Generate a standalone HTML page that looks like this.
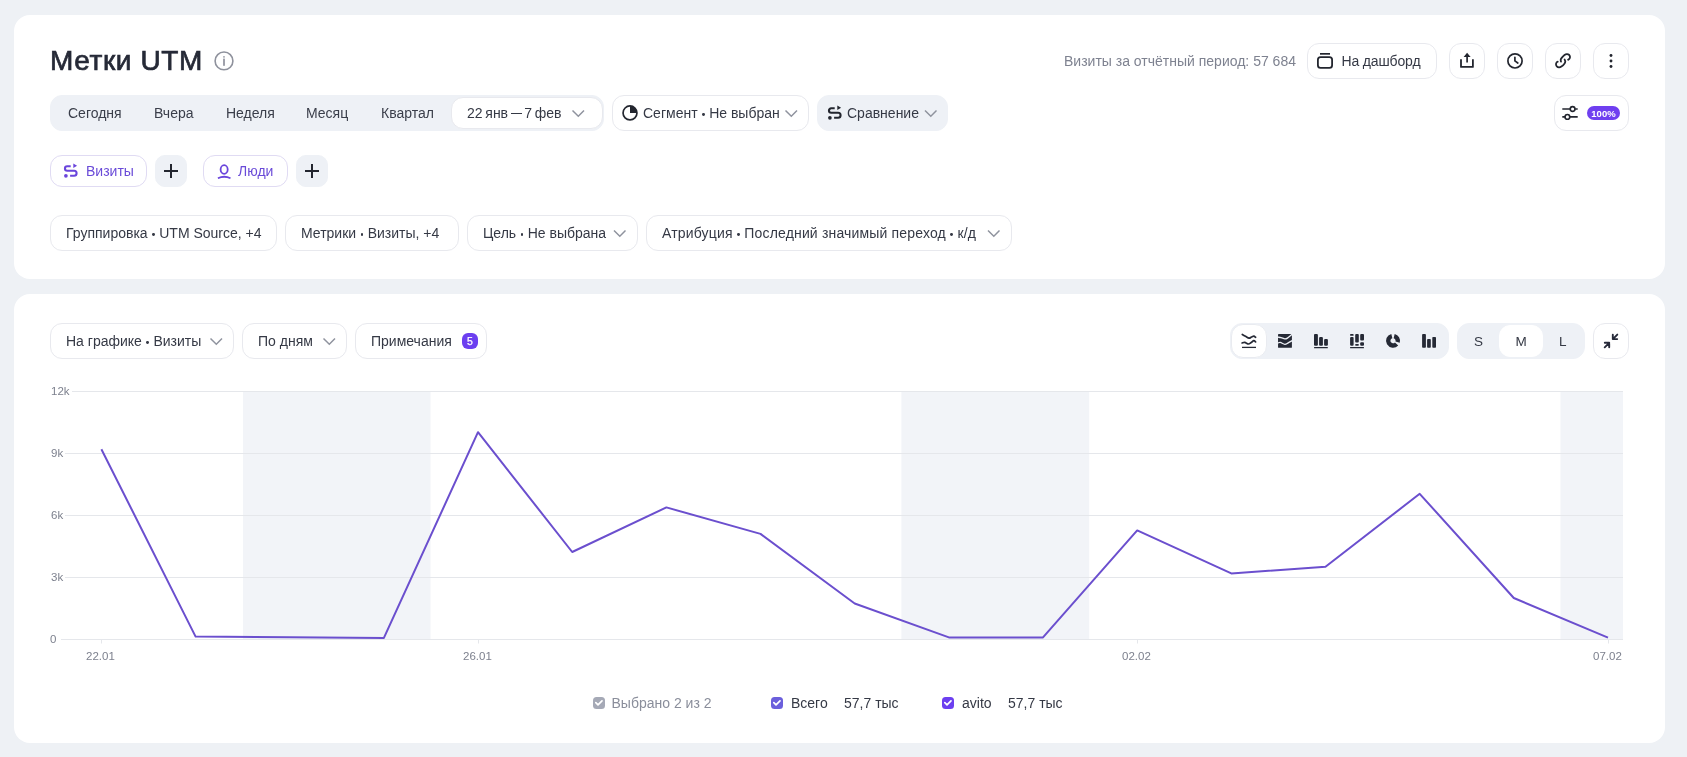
<!DOCTYPE html>
<html><head><meta charset="utf-8">
<style>
*{box-sizing:border-box;margin:0;padding:0}
html,body{width:1687px;height:757px;overflow:hidden;background:#eef1f5;font-family:"Liberation Sans",sans-serif;color:#353945}
.card{position:absolute;background:#fff;border-radius:16px}
.t{position:absolute;white-space:nowrap;font-size:14px}
.p{position:absolute;height:36px;line-height:34px;border:1px solid #e8e9ee;border-radius:12px;background:#fff;font-size:14px;white-space:nowrap;color:#353945}
.p span{position:absolute;top:0}
.g{background:#eef1f6;border-color:#eef1f6}
svg.ic{position:absolute;overflow:visible}
.b{display:inline-block;width:2.8px;height:2.8px;border-radius:50%;background:currentColor;margin:0 4.4px;vertical-align:2px}
.ax{position:absolute;font-size:11.5px;color:#7d818e;white-space:nowrap;line-height:14px}
</style></head><body><div id="w" style="position:absolute;left:0;top:0;width:1687px;height:757px;will-change:transform">
<div class="card" style="left:14px;top:15px;width:1651px;height:264px"></div>
<div class="card" style="left:14px;top:294px;width:1651px;height:449px"></div>

<!-- ===== HEADER ===== -->
<div class="t" style="left:50px;top:45px;font-size:28px;font-weight:normal;-webkit-text-stroke:0.7px #262a37;letter-spacing:0.6px;line-height:32px;color:#262a37">Метки UTM</div>
<svg class="ic" style="left:0;top:0" width="1" height="1">
  <circle cx="224" cy="60.9" r="8.9" fill="none" stroke="#8f929d" stroke-width="1.6"/>
  <rect x="223.15" y="56.1" width="1.7" height="1.7" rx=".8" fill="#8f929d"/><rect x="223.15" y="58.6" width="1.7" height="7.2" fill="#8f929d"/>
</svg>

<div class="t" style="left:1064px;top:43px;line-height:36px;color:#7e8290">Визиты за отчётный период: 57 684</div>

<div class="p" style="left:1307px;top:43px;width:130px"><span style="left:33.5px;letter-spacing:-0.15px">На дашборд</span></div>
<div class="p" style="left:1449px;top:43px;width:36px"></div>
<div class="p" style="left:1497px;top:43px;width:36px"></div>
<div class="p" style="left:1545px;top:43px;width:36px"></div>
<div class="p" style="left:1593px;top:43px;width:36px"></div>

<svg class="ic" style="left:0;top:0" width="1" height="1" fill="none" stroke="#23262f" stroke-width="1.8">
  <!-- dashboard -->
  <rect x="1320" y="53" width="10" height="1.7" fill="#23262f" stroke="none"/>
  <rect x="1317.9" y="57.2" width="14.2" height="10.7" rx="2.6"/>
  <!-- upload -->
  <path d="M1461 59.2V66.9H1472.9V59.2" stroke-linejoin="round"/>
  <path d="M1467.1 62.4V56" stroke-width="1.7"/>
  <path d="M1463.6 56.9L1467.1 52.8L1470.6 56.9Z" fill="#23262f" stroke="none"/>
  <!-- clock -->
  <circle cx="1515" cy="60.9" r="7.1" stroke-width="1.7"/>
  <path d="M1514.9 57.3V60.9L1517.8 63" stroke-width="1.7" stroke-linecap="round" stroke-linejoin="round"/>
  <!-- link -->
  <g stroke-linecap="round" stroke-width="1.8">
    <path d="M1561.00 61.60C1560.95 61.27 1560.55 60.27 1560.70 59.60C1560.85 58.93 1561.27 58.37 1561.90 57.60C1562.53 56.83 1563.68 55.58 1564.50 55.00C1565.32 54.42 1566.05 54.15 1566.80 54.10C1567.55 54.05 1568.47 54.25 1569.00 54.70C1569.53 55.15 1569.93 56.12 1570.00 56.80C1570.07 57.48 1569.72 58.30 1569.40 58.80C1569.08 59.30 1568.32 59.63 1568.10 59.80"/>
    <path d="M1564.60 59.50C1564.72 59.82 1565.33 60.70 1565.30 61.40C1565.27 62.10 1565.05 62.85 1564.40 63.70C1563.75 64.55 1562.30 65.90 1561.40 66.50C1560.50 67.10 1559.77 67.33 1559.00 67.30C1558.23 67.27 1557.30 66.82 1556.80 66.30C1556.30 65.78 1556.03 64.82 1556.00 64.20C1555.97 63.58 1556.32 63.02 1556.60 62.60C1556.88 62.18 1557.52 61.85 1557.70 61.70"/>
  </g>
  <!-- dots -->
  <g fill="#23262f" stroke="none">
    <circle cx="1611" cy="55.5" r="1.45"/><circle cx="1611" cy="61" r="1.45"/><circle cx="1611" cy="66.5" r="1.45"/>
  </g>
  <!-- dashboard -->
</svg>

<!-- ===== ROW: dates ===== -->
<div class="p g" style="left:50px;top:95px;width:554px"></div>
<div class="t" style="left:68px;top:95px;line-height:36px;color:#3a3e4a">Сегодня</div>
<div class="t" style="left:154px;top:95px;line-height:36px;color:#3a3e4a">Вчера</div>
<div class="t" style="left:226px;top:95px;line-height:36px;color:#3a3e4a">Неделя</div>
<div class="t" style="left:306px;top:95px;line-height:36px;color:#3a3e4a">Месяц</div>
<div class="t" style="left:381px;top:95px;line-height:36px;color:#3a3e4a">Квартал</div>
<div class="p" style="left:451px;top:97px;width:152px;height:32px;line-height:30px"><span style="left:15px;word-spacing:-1.15px">22 янв <i style="display:inline-block;width:10.7px;height:1.3px;background:currentColor;vertical-align:3.6px"></i> 7 фев</span></div>

<div class="p" style="left:612px;top:95px;width:197px"><span style="left:30px">Сегмент<i class="b"></i>Не выбран</span></div>
<div class="p g" style="left:817px;top:95px;width:131px"><span style="left:29px">Сравнение</span></div>

<div class="p" style="left:1554px;top:95px;width:75px"></div>
<div class="t" style="left:1587px;top:106px;width:33px;height:14px;border-radius:7px;background:#6f3ff0;color:#fff;font-size:9.5px;font-weight:bold;line-height:15px;text-align:center;letter-spacing:0.1px">100%</div>

<svg class="ic" style="left:0;top:0" width="1" height="1" fill="none" stroke="#23262f" stroke-width="1.7">
  <!-- chevrons -->
  <path d="M572.5 110.5L578.3 116.2L584 110.5" stroke="#8f939e" stroke-width="1.5"/>
  <path d="M785.5 110.5L791.3 116.2L797 110.5" stroke="#8f939e" stroke-width="1.5"/>
  <path d="M925 110.5L930.8 116.2L936.5 110.5" stroke="#8f939e" stroke-width="1.5"/>
  <!-- pie -->
  <circle cx="630" cy="112.9" r="6.95"/>
  <path d="M630 106V112.9H636.9A6.9 6.9 0 0 0 630 106Z" fill="#23262f" stroke="none"/>
  <!-- compare -->
  <g stroke-width="1.8">
    <path d="M834.7 108.3H831.2A2.23 2.23 0 0 0 831.2 112.76H838.1A2.47 2.47 0 0 1 838.1 117.7H834.1" stroke-width="2.1"/>
    <path d="M837.3 105.6V110L841.1 107.8Z" fill="#23262f" stroke="none"/>
    <circle cx="829.9" cy="117.8" r="1.85" fill="#23262f" stroke="none"/>
  </g>
  <!-- sliders -->
  <g stroke-width="1.6">
    <path d="M1562.3 109H1570.2M1575.1 109H1577.7"/>
    <circle cx="1572.6" cy="109" r="2.35"/>
    <path d="M1562.3 116.9H1565M1569.8 116.9H1577.7"/>
    <circle cx="1567.4" cy="116.9" r="2.35"/>
  </g>
</svg>

<!-- ===== ROW: visits / people ===== -->
<div class="p" style="left:50px;top:155px;width:97px;height:32px;line-height:30px;border-color:#e0dbf3;color:#6a4bd8"><span style="left:35px">Визиты</span></div>
<div class="p g" style="left:155px;top:155px;width:32px;height:32px;border-radius:10px"></div>
<div class="p" style="left:203px;top:155px;width:85px;height:32px;line-height:30px;border-color:#e0dbf3;color:#6a4bd8"><span style="left:34px">Люди</span></div>
<div class="p g" style="left:296px;top:155px;width:32px;height:32px;border-radius:10px"></div>
<svg class="ic" style="left:0;top:0" width="1" height="1" fill="none" stroke="#23262f" stroke-width="2">
  <path d="M164 171H178M171 164V178"/>
  <path d="M305 171H319M312 164V178"/>
  <g stroke="#6a45dc" stroke-width="1.8">
    <path d="M70.7 166.3H67.2A2.23 2.23 0 0 0 67.2 170.76H74.1A2.47 2.47 0 0 1 74.1 175.7H70.1" stroke-width="2.1"/>
    <path d="M73.3 163.6V168L77.1 165.8Z" fill="#6a45dc" stroke="none"/>
    <circle cx="65.9" cy="175.8" r="1.85" fill="#6a45dc" stroke="none"/>
    <ellipse cx="224.15" cy="169.5" rx="3.55" ry="4.3"/>
    <path d="M217.9 178.2Q224.2 175.3 230.5 178.2"/>
  </g>
</svg>

<!-- ===== ROW: grouping ===== -->
<div class="p" style="left:50px;top:215px;width:227px"><span style="left:15px">Группировка<i class="b"></i>UTM Source, +4</span></div>
<div class="p" style="left:285px;top:215px;width:174px"><span style="left:15px">Метрики<i class="b"></i>Визиты, +4</span></div>
<div class="p" style="left:467px;top:215px;width:171px"><span style="left:15px">Цель<i class="b"></i>Не выбрана</span></div>
<div class="p" style="left:646px;top:215px;width:366px"><span style="left:15px;letter-spacing:0.17px">Атрибуция<i class="b"></i>Последний значимый переход<i class="b"></i>к/д</span></div>
<svg class="ic" style="left:0;top:0" width="1" height="1" fill="none" stroke="#8f939e" stroke-width="1.5">
  <path d="M614 230.5L619.8 236.2L625.5 230.5"/>
  <path d="M988 230.5L993.8 236.2L999.5 230.5"/>
</svg>

<!-- ===== CARD 2 controls ===== -->
<div class="p" style="left:50px;top:323px;width:184px"><span style="left:15px">На графике<i class="b"></i>Визиты</span></div>
<div class="p" style="left:242px;top:323px;width:105px"><span style="left:15px">По дням</span></div>
<div class="p" style="left:355px;top:323px;width:132px"><span style="left:15px">Примечания</span></div>
<div class="t" style="left:462px;top:333px;width:16px;height:16px;border-radius:6px;background:#6c3ff0;color:#fff;font-size:10.5px;-webkit-text-stroke:0.25px #fff;line-height:16px;text-align:center">5</div>
<svg class="ic" style="left:0;top:0" width="1" height="1" fill="none" stroke="#8f939e" stroke-width="1.5">
  <path d="M210.5 338.5L216.3 344.2L222 338.5"/>
  <path d="M323.5 338.5L329.3 344.2L335 338.5"/>
</svg>

<div class="p g" style="left:1230px;top:323px;width:219px"></div>
<div class="p" style="left:1231px;top:324px;width:36px;height:34px;border-color:#e9ebf0"></div>
<div class="p g" style="left:1457px;top:323px;width:128px"></div>
<div class="p" style="left:1499px;top:325px;width:44px;height:32px;border-radius:11px;border-color:#fff"></div>
<div class="t" style="left:1474px;top:324px;line-height:36px;font-size:13.5px;color:#353945">S</div>
<div class="t" style="left:1515.5px;top:324px;line-height:36px;font-size:13.5px;color:#353945">M</div>
<div class="t" style="left:1559px;top:324px;line-height:36px;font-size:13.5px;color:#353945">L</div>
<div class="p" style="left:1593px;top:323px;width:36px"></div>

<svg class="ic" style="left:0;top:0" width="1" height="1" fill="none" stroke="#252935" stroke-width="1.7">
  <!-- line chart icon -->
  <path d="M1242.30 334.50C1242.83 334.80 1244.37 335.68 1245.50 336.30C1246.63 336.92 1248.10 338.08 1249.10 338.20C1250.10 338.32 1250.70 337.33 1251.50 337.00C1252.30 336.67 1253.22 336.15 1253.90 336.20C1254.58 336.25 1255.32 337.12 1255.60 337.30" stroke-linecap="round"/>
  <path d="M1242.10 343.00C1242.55 342.90 1243.73 342.23 1244.80 342.40C1245.87 342.57 1247.43 344.00 1248.50 344.00C1249.57 344.00 1250.30 342.95 1251.20 342.40C1252.10 341.85 1253.17 340.78 1253.90 340.70C1254.63 340.62 1255.32 341.70 1255.60 341.90" stroke-linecap="round"/>
  <path d="M1242 347.4H1256" stroke-width="1.3"/>
  <!-- stacked area -->
  <rect x="1278.04" y="333.9" width="13.86" height="13.9" rx="0.6" fill="#252935" stroke="none"/>
  <path d="M1277.50 337.10C1277.59 337.12 1277.44 337.12 1278.04 337.20C1278.64 337.28 1279.97 337.32 1281.10 337.60C1282.23 337.880 1283.75 338.82 1284.80 338.90C1285.85 338.98 1286.17 338.88 1287.40 338.10C1288.63 337.32 1291.40 334.85 1292.20 334.20M1277.50 343.00C1277.59 342.98 1277.57 343.00 1278.04 342.90C1278.51 342.80 1279.17 342.17 1280.30 342.40C1281.43 342.63 1283.48 344.22 1284.80 344.30C1286.12 344.38 1286.97 343.52 1288.20 342.90C1289.43 342.28 1291.53 340.98 1292.20 340.60" stroke="#eef1f6" stroke-width="1.3"/>
  <!-- bar chart -->
  <g fill="#252935" stroke="none">
    <rect x="1314" y="333.9" width="3.9" height="11.8" rx="1"/>
    <rect x="1319.1" y="337" width="3.8" height="8.7" rx="1"/>
    <rect x="1324.1" y="339.1" width="3.8" height="6.6" rx="1"/>
    <rect x="1314" y="347" width="13.9" height="1.2" rx=".5"/>
    <!-- stacked bar -->
    <rect x="1350.1" y="334.1" width="3.5" height="1.7" rx=".6"/>
    <rect x="1350.1" y="337" width="3.5" height="8.7" rx="1"/>
    <rect x="1355.2" y="334.1" width="3.6" height="8.5" rx="1"/>
    <rect x="1355.2" y="344" width="3.6" height="1.7" rx=".6"/>
    <rect x="1360.2" y="334.1" width="3.8" height="6.4" rx="1"/>
    <rect x="1360.2" y="342.2" width="3.8" height="3.5" rx="1"/>
    <rect x="1350" y="347" width="14" height="1.2" rx=".5"/>
    <!-- bars -->
    <rect x="1422.1" y="334.1" width="3.8" height="13.7" rx=".8"/>
    <rect x="1427.1" y="339.1" width="3.7" height="8.7" rx=".8"/>
    <rect x="1432.3" y="337" width="3.7" height="10.8" rx=".8"/>
  </g>
  <!-- donut -->
  <g stroke="#252935" stroke-width="4.4">
    <path d="M1394.16 336.04A4.8 4.8 0 0 1 1397.61 342.02"/>
    <path d="M1391.84 336.04A4.8 4.8 0 1 0 1396.57 343.91"/>
  </g>
  <!-- collapse -->
  <g stroke-width="1.9" stroke-linecap="round" stroke-linejoin="round" stroke="#272a3a">
    <path d="M1612.8 334.7V339.1H1617.2M1612.8 339.1L1617.3 334.6"/>
    <path d="M1604.8 342.8H1609.2V347.2M1609.2 342.8L1604.7 347.3"/>
  </g>
</svg>

<!-- ===== CHART ===== -->
<svg class="ic" style="left:0;top:0" width="1687" height="757">
  <g fill="#f2f4f8">
    <rect x="243" y="391.5" width="187.5" height="248"/>
    <rect x="901.4" y="391.5" width="187.8" height="248"/>
    <rect x="1560.5" y="391.5" width="62.5" height="248"/>
  </g>
  <g stroke="#e5e7eb" stroke-width="1">
    <path d="M72 391.5H1623"/>
    <path d="M65 453.5H1623"/>
    <path d="M65 515.5H1623"/>
    <path d="M65 577.5H1623"/>
    <path d="M61 639.5H1623"/>
    <path d="M101.5 640V643.5M478.5 640V643.5M1137.5 640V643.5M1608.5 640V643.5"/>
  </g>
  <polyline fill="none" stroke="#6b4fce" stroke-width="2" stroke-linejoin="round" points="101.4,449.2 195.6,636.6 289.7,637.3 383.9,637.9 478.0,432.2 572.2,552.0 666.4,507.4 760.5,533.9 854.7,603.5 948.9,637.4 1043.0,637.4 1137.2,530.4 1231.3,573.4 1325.5,566.7 1419.7,493.8 1513.8,598.0 1608.0,637.7"/>
</svg>
<div class="ax" style="left:51px;top:384px">12k</div>
<div class="ax" style="left:51px;top:446px">9k</div>
<div class="ax" style="left:51px;top:508px">6k</div>
<div class="ax" style="left:51px;top:570px">3k</div>
<div class="ax" style="left:50px;top:632px">0</div>
<div class="ax" style="left:86px;top:649px">22.01</div>
<div class="ax" style="left:463px;top:649px">26.01</div>
<div class="ax" style="left:1122px;top:649px">02.02</div>
<div class="ax" style="left:1593px;top:649px">07.02</div>

<!-- ===== LEGEND ===== -->
<svg class="ic" style="left:0;top:0" width="1" height="1">
  <rect x="593" y="697" width="12" height="12" rx="3.5" fill="#a5a9b6"/>
  <rect x="771" y="697" width="12" height="12" rx="3.5" fill="#6b5fdc"/>
  <rect x="942" y="697" width="12" height="12" rx="3.5" fill="#6c3ff0"/>
  <g fill="none" stroke="#fff" stroke-width="1.7" stroke-linecap="round" stroke-linejoin="round">
    <path d="M595.8 702.7L598 704.8L602 700.8"/>
    <path d="M773.8 702.7L776 704.8L780 700.8"/>
    <path d="M944.8 702.7L947 704.8L951 700.8"/>
  </g>
</svg>
<div class="t" style="left:611.5px;top:685px;line-height:36px;color:#8a8e9b">Выбрано 2 из 2</div>
<div class="t" style="left:791px;top:685px;line-height:36px;color:#353945">Всего</div>
<div class="t" style="left:844px;top:685px;line-height:36px;color:#353945">57,7 тыс</div>
<div class="t" style="left:962px;top:685px;line-height:36px;color:#353945">avito</div>
<div class="t" style="left:1008px;top:685px;line-height:36px;color:#353945">57,7 тыс</div>

</div></body></html>
